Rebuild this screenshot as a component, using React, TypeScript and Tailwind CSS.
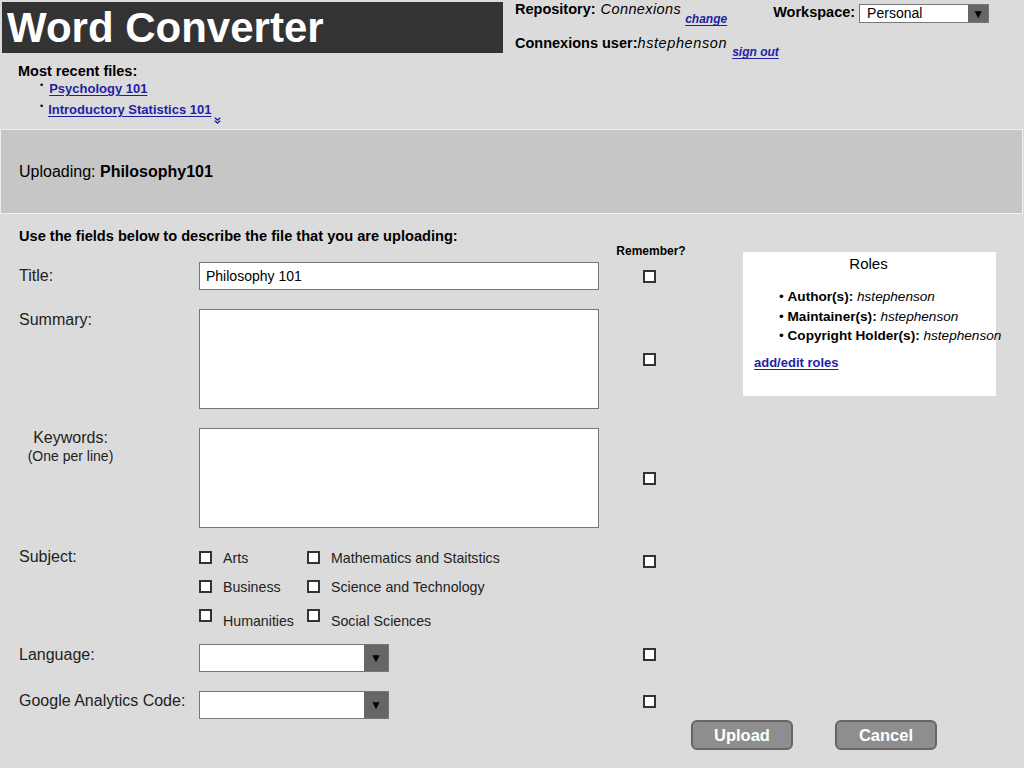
import React from "react";

const font = { fontFamily: '"Liberation Sans", Arial, Helvetica, sans-serif' };

function Box({ className = "" }: { className?: string }) {
  return <span className={`block w-[13px] h-[13px] shrink-0 bg-white border-2 border-[#333333] ${className}`} />;
}

function Select({ width, height, arrow, children }: { width: string; height: string; arrow: string; children?: React.ReactNode }) {
  return (
    <div className={`flex ${width} ${height} bg-white border border-[#777777]`}>
      <div className="flex-1 flex items-center pl-[7px] text-[14px] text-black">{children}</div>
      <div className={`${arrow} bg-[#666666] flex items-center justify-center text-black text-[12px] leading-none`}>▼</div>
    </div>
  );
}

function Option({ label, last }: { label: string; last?: boolean }) {
  return (
    <div className="flex items-start h-[14px]">
      <Box />
      <span className={`ml-[11px] text-[14.2px] leading-[14px] text-[#222222] whitespace-nowrap ${last ? "mt-[5px]" : ""}`}>{label}</span>
    </div>
  );
}

function Link({ children, className = "" }: { children: React.ReactNode; className?: string }) {
  return (
    <a href="#" className={`text-[#1f1fa3] font-bold underline underline-offset-2 ${className}`}>
      {children}
    </a>
  );
}

export default function App() {
  return (
    <div className="w-[1024px] h-[768px] bg-[#dbdbdb] text-black overflow-hidden" style={font}>
      {/* header */}
      <div className="flex items-start h-[53px]">
        <div className="ml-[2px] mt-[2px] w-[501px] h-[51px] bg-[#333333] flex items-center pl-[5px]">
          <span className="text-white font-bold text-[42px] leading-none">Word Converter</span>
        </div>
        <div className="ml-[12px] pt-[1px]">
          <div className="flex items-start h-[25px]">
            <span className="text-[14.5px] leading-[16px] font-bold">Repository:</span>
            <span className="ml-[5px] text-[14.5px] leading-[16px] italic tracking-[0.4px]">Connexions</span>
            <Link className="ml-[4px] mt-[11px] text-[12px] leading-[14px] italic">change</Link>
            <span className="ml-[46px] mt-[3px] text-[14.5px] leading-[16px] font-bold">Workspace:</span>
            <span className="ml-[4px] mt-[3px]">
              <Select width="w-[130px]" height="h-[19px]" arrow="w-[20px]">Personal</Select>
            </span>
          </div>
          <div className="flex items-start mt-[9px]">
            <span className="text-[14.5px] leading-[16px] font-bold">Connexions user:</span>
            <span className="text-[14.5px] leading-[16px] italic tracking-[0.6px]">hstephenson</span>
            <Link className="ml-[5px] mt-[10px] text-[12px] leading-[14px] italic">sign out</Link>
          </div>
        </div>
      </div>

      {/* recent files */}
      <div className="pl-[18px] pt-[10px] h-[76px]">
        <div className="text-[14.5px] leading-[16px] font-bold">Most recent files:</div>
        <div className="pl-[22px] mt-[2px] flex items-start">
          <span className="text-[9px] leading-[10px] mt-[-1px]">•</span>
          <Link className="ml-[6px] text-[13px] leading-[16px]">Psychology 101</Link>
        </div>
        <div className="pl-[22px] mt-[5px] flex items-start">
          <span className="text-[9px] leading-[10px] mt-[-1px]">•</span>
          <Link className="ml-[5px] text-[13px] leading-[16px]">Introductory Statistics 101</Link>
          <svg className="ml-[3px] mt-[15px]" width="7" height="7" viewBox="0 0 7 7" fill="none" stroke="#1f1fa3" strokeWidth="1.4">
            <path d="M0.8 0.8 L3.5 3 L6.2 0.8" />
            <path d="M0.8 3.8 L3.5 6 L6.2 3.8" />
          </svg>
        </div>
      </div>

      {/* uploading band */}
      <div className="w-[1023px] h-[85px] bg-[#c6c6c6] border border-[#efefef] flex items-center pl-[18px]">
        <span className="text-[16px] leading-[18px]">
          Uploading: <b>Philosophy101</b>
        </span>
      </div>

      {/* form */}
      <div className="pl-[19px] pt-[13px]">
        <div className="text-[14.6px] leading-[18px] font-bold">
          Use the fields below to describe the file that you are uploading:
        </div>
        <div className="flex items-start">
          <div className="w-[680px] flex flex-col">
            <div className="flex">
              <div className="w-[580px]" />
              <div className="w-[100px] text-center text-[12px] leading-[12px] font-bold pl-[4px]">Remember?</div>
            </div>

            {/* title */}
            <div className="flex items-center mt-[5px] h-[28px]">
              <div className="w-[180px] text-[16px] leading-[18px] text-[#222222]">Title:</div>
              <div className="w-[400px] h-[28px] bg-white border border-[#777777] flex items-center pl-[6px] text-[14px]">
                Philosophy 101
              </div>
              <div className="w-[100px] flex justify-center"><Box /></div>
            </div>

            {/* summary */}
            <div className="flex items-center mt-[19px] h-[100px]">
              <div className="w-[180px] self-start pt-[2px] text-[16px] leading-[18px] text-[#222222]">Summary:</div>
              <div className="w-[400px] h-[100px] bg-white border border-[#777777]" />
              <div className="w-[100px] flex justify-center"><Box /></div>
            </div>

            {/* keywords */}
            <div className="flex items-center mt-[19px] h-[100px]">
              <div className="w-[180px] self-start pt-[1px]">
                <div className="w-[103px] text-center">
                  <div className="text-[16px] leading-[18px] text-[#222222]">Keywords:</div>
                  <div className="text-[14px] leading-[16px] mt-[1px] text-[#222222]">(One per line)</div>
                </div>
              </div>
              <div className="w-[400px] h-[100px] bg-white border border-[#777777]" />
              <div className="w-[100px] flex justify-center"><Box /></div>
            </div>

            {/* subject */}
            <div className="flex items-start mt-[20px] h-[80px]">
              <div className="w-[180px] text-[16px] leading-[18px] text-[#222222]">Subject:</div>
              <div className="w-[400px] pt-[3px] grid grid-cols-[108px_1fr] gap-y-[15px]">
                <Option label="Arts" />
                <Option label="Mathematics and Staitstics" />
                <Option label="Business" />
                <Option label="Science and Technology" />
                <Option label="Humanities" last />
                <Option label="Social Sciences" last />
              </div>
              <div className="w-[100px] flex justify-center pt-[7px]"><Box /></div>
            </div>

            {/* language */}
            <div className="flex items-start mt-[16px] h-[28px]">
              <div className="w-[180px] pt-[2px] text-[16px] leading-[18px] text-[#222222]">Language:</div>
              <div className="w-[400px]">
                <Select width="w-[190px]" height="h-[28px]" arrow="w-[24px]" />
              </div>
              <div className="w-[100px] flex justify-center pt-[4px]"><Box /></div>
            </div>

            {/* analytics */}
            <div className="flex items-start mt-[19px] h-[28px]">
              <div className="w-[180px] pt-[1px] text-[16px] leading-[18px] text-[#222222] whitespace-nowrap">Google Analytics Code:</div>
              <div className="w-[400px]">
                <Select width="w-[190px]" height="h-[28px]" arrow="w-[24px]" />
              </div>
              <div className="w-[100px] flex justify-center pt-[4px]"><Box /></div>
            </div>
          </div>

          {/* roles */}
          <div className="ml-[44px] mt-[7px] w-[253px] h-[144px] bg-white">
            <div className="pt-[3px] text-center text-[15px] leading-[18px] pr-[2px]">Roles</div>
            <div className="pl-[36px] mt-[14px] text-[13.6px] leading-[19.5px] whitespace-nowrap">
              <div>• <b>Author(s):</b> <i>hstephenson</i></div>
              <div>• <b>Maintainer(s):</b> <i>hstephenson</i></div>
              <div>• <b>Copyright Holder(s):</b> <i>hstephenson</i></div>
            </div>
            <div className="pl-[11px] mt-[8px] leading-[16px]">
              <Link className="text-[13px]">add/edit roles</Link>
            </div>
          </div>
        </div>

        {/* buttons */}
        <div className="flex gap-[42px] pl-[672px] mt-[1px]">
          <button className="w-[102px] h-[30px] bg-[#8e8e8e] border-2 border-[#666666] rounded-[6px] text-white font-bold text-[16.5px]">
            Upload
          </button>
          <button className="w-[102px] h-[30px] bg-[#8e8e8e] border-2 border-[#666666] rounded-[6px] text-white font-bold text-[16.5px]">
            Cancel
          </button>
        </div>
      </div>
    </div>
  );
}
